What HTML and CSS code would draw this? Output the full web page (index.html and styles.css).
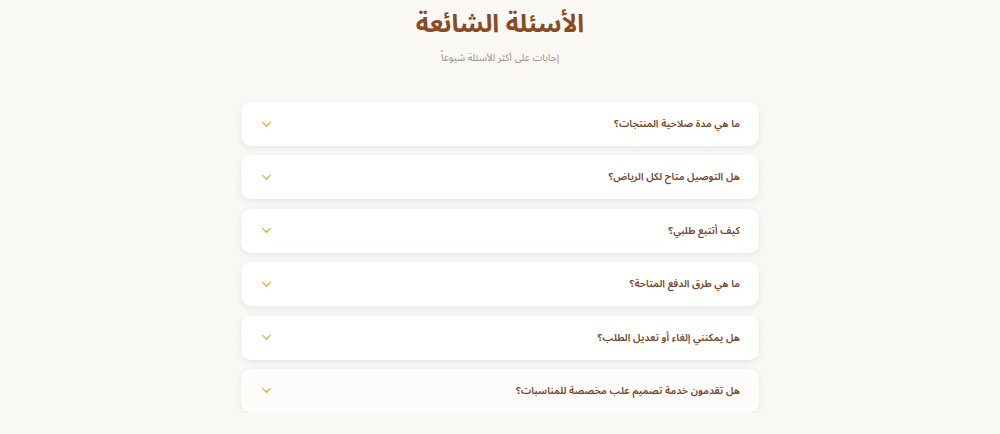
FILE: index.html
```html
<!DOCTYPE html>
<html lang="ar" dir="rtl">
<head>
<meta charset="utf-8">
<link rel="stylesheet" href="styles.css">
</head>
<body>
<section class="faq">
  <header class="faq-head">
    <h1 class="faq-title">الأسئلة الشائعة</h1>
    <p class="faq-sub">إجابات على أكثر الأسئلة شيوعاً</p>
  </header>
  <div class="faq-list">
    <div class="faq-item"><span class="q">ما هي مدة صلاحية المنتجات؟</span><svg class="chev" viewBox="0 0 12 8"><path d="M1.5 1.5 6 6l4.5-4.5"/></svg></div>
    <div class="faq-item"><span class="q">هل التوصيل متاح لكل الرياض؟</span><svg class="chev" viewBox="0 0 12 8"><path d="M1.5 1.5 6 6l4.5-4.5"/></svg></div>
    <div class="faq-item"><span class="q">كيف أتتبع طلبي؟</span><svg class="chev" viewBox="0 0 12 8"><path d="M1.5 1.5 6 6l4.5-4.5"/></svg></div>
    <div class="faq-item"><span class="q">ما هي طرق الدفع المتاحة؟</span><svg class="chev" viewBox="0 0 12 8"><path d="M1.5 1.5 6 6l4.5-4.5"/></svg></div>
    <div class="faq-item"><span class="q">هل يمكنني إلغاء أو تعديل الطلب؟</span><svg class="chev" viewBox="0 0 12 8"><path d="M1.5 1.5 6 6l4.5-4.5"/></svg></div>
    <div class="faq-item last"><span class="q">هل تقدمون خدمة تصميم علب مخصصة للمناسبات؟</span><svg class="chev" viewBox="0 0 12 8"><path d="M1.5 1.5 6 6l4.5-4.5"/></svg></div>
  </div>
</section>
</body>
</html>
```
FILE: styles.css
```css
html, body {
  margin: 0;
  padding: 0;
  background: #f9f8f5;
  font-family: "Noto Sans Arabic", "DejaVu Sans", sans-serif;
}
.faq {
  width: 518px;
  margin: 0 auto;
  padding-top: 8px;
}
.faq-head {
  text-align: center;
}
.faq-title {
  margin: 0;
  font-size: 25px;
  line-height: 32px;
  font-weight: 700;
  color: #8a4b1f;
}
.faq-sub {
  margin: 9px 0 0;
  font-size: 10px;
  line-height: 18px;
  color: #a08f80;
}
.faq-list {
  margin-top: 35px;
  display: flex;
  flex-direction: column;
  gap: 9.4px;
}
.faq-item {
  height: 44px;
  box-sizing: border-box;
  padding: 0 19px 0 20px;
  background: #ffffff;
  border-radius: 10px;
  box-shadow: 0 2px 6px rgba(120, 100, 70, 0.12);
  display: flex;
  align-items: center;
  justify-content: space-between;
}
.faq-item.last {
  background: #fdfcfa;
}
.q {
  font-size: 10.2px;
  font-weight: 600;
  color: #74472a;
}
.chev {
  width: 11px;
  height: 7px;
  fill: none;
  stroke: #d9ad3c;
  stroke-width: 1.4;
  stroke-linecap: round;
  stroke-linejoin: round;
}
```
